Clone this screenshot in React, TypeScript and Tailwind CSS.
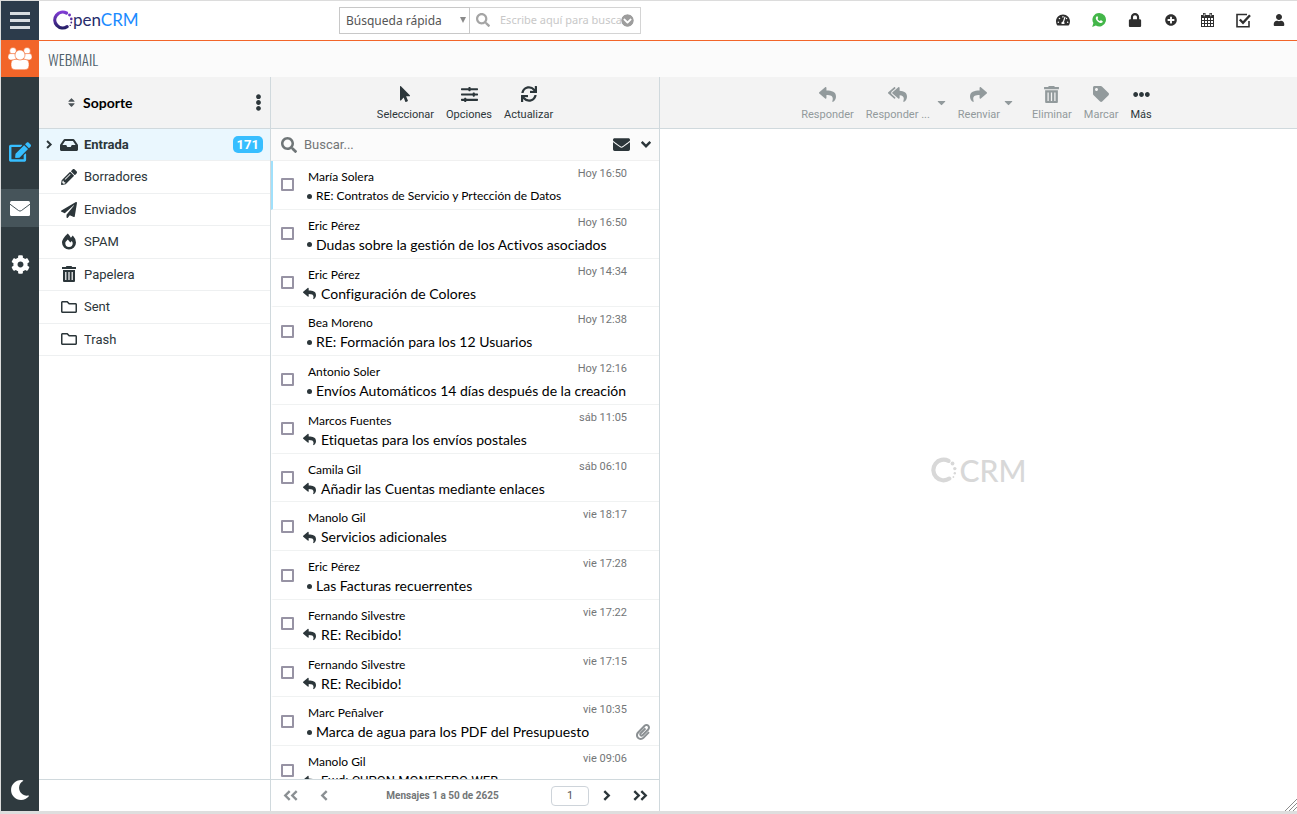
import { useState } from 'react';
import type { ReactNode } from 'react';
import {
  FaTachometerAlt, FaLock, FaPlusCircle, FaEdit, FaCog, FaMoon, FaInbox, FaPencilAlt, FaPaperPlane,
  FaRegFolder, FaMousePointer, FaSlidersH, FaSync, FaReply, FaReplyAll, FaShare, FaTag, FaEllipsisH,
  FaEllipsisV, FaSearch, FaEnvelope, FaSort, FaPaperclip, FaChevronCircleDown, FaUser, FaCaretDown,
} from 'react-icons/fa';

type Message = {
  from: string;
  subject: string;
  date: string;
  replied?: boolean;
  attachment?: boolean;
  subjectClass?: string;
};

const messages: Message[] = [
  { from: 'María Solera', subject: 'RE: Contratos de Servicio y Prtección de Datos', date: 'Hoy 16:50', subjectClass: 'text-xs' },
  { from: 'Eric Pérez', subject: 'Dudas sobre la gestión de los Activos asociados', date: 'Hoy 16:50' },
  { from: 'Eric Pérez', subject: 'Configuración de Colores', date: 'Hoy 14:34', replied: true },
  { from: 'Bea Moreno', subject: 'RE: Formación para los 12 Usuarios', date: 'Hoy 12:38' },
  { from: 'Antonio Soler', subject: 'Envíos Automáticos 14 días después de la creación', date: 'Hoy 12:16' },
  { from: 'Marcos Fuentes', subject: 'Etiquetas para los envíos postales', date: 'sáb 11:05', replied: true },
  { from: 'Camila Gil', subject: 'Añadir las Cuentas mediante enlaces', date: 'sáb 06:10', replied: true },
  { from: 'Manolo Gil', subject: 'Servicios adicionales', date: 'vie 18:17', replied: true },
  { from: 'Eric Pérez', subject: 'Las Facturas recuerrentes', date: 'vie 17:28' },
  { from: 'Fernando Silvestre', subject: 'RE: Recibido!', date: 'vie 17:22', replied: true },
  { from: 'Fernando Silvestre', subject: 'RE: Recibido!', date: 'vie 17:15', replied: true },
  { from: 'Marc Peñalver', subject: 'Marca de agua para los PDF del Presupuesto', date: 'vie 10:35', attachment: true },
  {
    from: 'Manolo Gil',
    subject: 'Fwd: CUPON MONEDERO WEB',
    date: 'vie 09:06',
    replied: true,
    subjectClass: "font-['Roboto',sans-serif] text-[13px]",
  },
];

const folders = [
  { name: 'Entrada', icon: <FaInbox size={18} />, count: 171 },
  { name: 'Borradores', icon: <FaPencilAlt size={16} /> },
  { name: 'Enviados', icon: <FaPaperPlane size={16} /> },
  { name: 'SPAM', icon: <FlameIcon /> },
  { name: 'Papelera', icon: <TrashIcon size={16} /> },
  { name: 'Sent', icon: <FaRegFolder size={16} /> },
  { name: 'Trash', icon: <FaRegFolder size={16} /> },
];

const topActions = [
  { label: 'Panel', icon: <FaTachometerAlt size={14} /> },
  { label: 'WhatsApp', icon: <WhatsappIcon /> },
  { label: 'Bloquear', icon: <FaLock size={14} /> },
  { label: 'Añadir', icon: <FaPlusCircle size={12} /> },
  { label: 'Calendario', icon: <CalendarIcon /> },
  { label: 'Tareas', icon: <TaskIcon /> },
  { label: 'Usuario', icon: <FaUser size={12} /> },
];

export default function App() {
  const [folder, setFolder] = useState('Entrada');

  return (
    <div className="h-screen flex flex-col overflow-hidden border-t border-l border-[#dcdcdc] bg-white font-['Roboto',sans-serif] text-[#2c363a]">
      <div className="flex flex-1 min-h-0">
        <Sidebar />
        <div className="flex flex-col flex-1 min-w-0">
          <Header />
          <div className="h-9 shrink-0 flex items-center bg-[#fbfbfb] pl-[9px]">
            <h1 className="font-['Oswald','Roboto_Condensed','Open_Sans_Condensed','Roboto',sans-serif] text-[15px] font-light text-[#4f5f6b]">WEBMAIL</h1>
          </div>
          <main className="flex flex-1 min-h-0">
            <section className="w-[232px] shrink-0 flex flex-col border-r border-[#d0d9dd]">
              <div className="h-[52px] shrink-0 flex items-center bg-[#f3f3f3] border-b border-[#d0d9dd] pl-[27px] pr-[3px]">
                <FaSort size={11} className="text-[#4b5357]" />
                <span className="flex-1 pl-[6px] font-['Lato',sans-serif] text-sm font-bold text-black">Soporte</span>
                <button aria-label="Opciones de carpeta"><FaEllipsisV size={17} /></button>
              </div>
              <nav className="grid auto-rows-fr h-[227px] shrink-0">
                {folders.map((f) => (
                  <button
                    key={f.name}
                    onClick={() => setFolder(f.name)}
                    className={`flex items-center border-b border-[#eef0f1] pl-[7px] pr-[7px] text-[13px] ${
                      folder === f.name ? 'bg-[#eaf7fe] font-bold' : ''
                    }`}
                  >
                    <span className="w-[13px]">{f.count && <Chevron className="h-[9px]" />}</span>
                    <span className="w-5 flex justify-center">{f.icon}</span>
                    <span className="flex-1 pl-[5px] text-left">{f.name}</span>
                    {f.count && (
                      <span className="h-[17px] rounded-[5px] bg-[#37beff] px-1 font-bold leading-[17px] text-white">{f.count}</span>
                    )}
                  </button>
                ))}
              </nav>
              <div className="flex-1" />
              <div className="h-8 shrink-0 border-t border-[#d0d9dd]" />
            </section>
            <MessageList />
            <section className="relative flex-1 min-w-0 flex flex-col">
              <div className="h-[52px] shrink-0 flex justify-center gap-3 bg-[#f3f3f3] border-b border-[#d0d9dd] pt-2 pr-1">
                <ToolButton disabled label="Responder" icon={<FaReply size={17} />} />
                <div className="flex gap-2">
                  <ToolButton disabled label="Responder ..." icon={<FaReplyAll size={19} />} />
                  <MoreArrow label="Más opciones de respuesta" />
                </div>
                <div className="flex gap-1">
                  <ToolButton disabled label="Reenviar" icon={<FaShare size={17} />} />
                  <MoreArrow label="Más opciones de reenvío" />
                </div>
                <div className="flex gap-3 pl-2">
                  <ToolButton disabled label="Eliminar" icon={<TrashIcon size={17} />} />
                  <ToolButton disabled label="Marcar" icon={<FaTag size={16} />} />
                  <ToolButton label="Más" icon={<FaEllipsisH size={17} />} />
                </div>
              </div>
              <div className="flex-1 flex items-center justify-center gap-[3px] text-[#d8d8d8]">
                <LogoMark size={26} color="#d8d8d8" />
                <span className="font-['Lato',sans-serif] text-3xl font-medium">CRM</span>
              </div>
              <svg className="absolute bottom-0 right-0" width="13" height="12" viewBox="0 0 13 12" stroke="#8c8c8c">
                <path d="M1 12 13 0M5 12l8-8M9 12l4-4" />
              </svg>
            </section>
          </main>
        </div>
      </div>
      <div className="h-[3px] shrink-0 bg-[#dedede]" />
    </div>
  );
}

function Sidebar() {
  return (
    <aside className="w-[38px] shrink-0 flex flex-col bg-[#2f3a3f] text-white">
      <button aria-label="Menú" className="h-[39px] flex flex-col items-center justify-center gap-1 bg-[#2c3b4b]">
        <span className="h-[3px] w-5 bg-[#d9dde0]" />
        <span className="h-[3px] w-5 bg-[#d9dde0]" />
        <span className="h-[3px] w-5 bg-[#d9dde0]" />
      </button>
      <button aria-label="Contactos" className="h-[37px] flex items-center justify-center bg-[#f26529]">
        <PeopleIcon />
      </button>
      <button aria-label="Redactar" className="mt-14 h-[38px] flex items-center justify-center text-[#37beff]">
        <FaEdit size={22} />
      </button>
      <button aria-label="Correo" className="mt-[18px] h-[38px] flex items-center justify-center bg-[#46545a]">
        <svg width="20" height="15" viewBox="0 0 20 15">
          <rect width="20" height="15" rx="1.5" fill="#fff" />
          <path d="M0 3.2 8.6 9.6q1.4 1 2.8 0L20 3.2" fill="none" stroke="#46545a" strokeWidth="1" />
        </svg>
      </button>
      <button aria-label="Configuración" className="mt-[18px] h-[38px] flex items-center justify-center">
        <FaCog size={19} />
      </button>
      <span className="flex-1" />
      <button aria-label="Modo oscuro" className="h-[42px] flex items-center justify-center">
        <FaMoon size={20} />
      </button>
    </aside>
  );
}

function Header() {
  return (
    <header className="h-10 shrink-0 flex items-center border-b border-[#f26529] pb-px">
      <a href="#" aria-label="OpenCRM" className="w-[300px] flex items-center pl-[14px]">
        <LogoMark size={20} color="url(#brand)" />
        <span className="font-['Lato',sans-serif] text-[17px] leading-5 text-[#272c6b]">
          pen<span className="text-[#1b8bff]">CRM</span>
        </span>
      </a>
      <div className="flex h-[27px] font-['Noto_Sans',sans-serif] text-[#555]">
        <div className="relative w-[131px]">
          <select aria-label="Tipo de búsqueda" className="h-full w-full appearance-none border border-[#c8c8c8] pl-[6px] text-xs">
            <option>Búsqueda rápida</option>
          </select>
          <svg className="absolute right-1 top-[10px]" width="6" height="6" viewBox="0 0 6 6"><path d="M0 0h6L3 6z" fill="#8a8a8a" /></svg>
        </div>
        <label className="relative flex w-[171px] items-center border border-l-0 border-[#d4d4d4] pl-[6px]">
          <FaSearch size={14} className="shrink-0 text-[#a5a5a5]" />
          <input
            aria-label="Buscar en OpenCRM"
            placeholder="Escribe aquí para buscar"
            className="min-w-0 flex-1 pl-[10px] text-[11px] outline-none placeholder:text-[#c8c8c8]"
          />
          <FaChevronCircleDown size={13} className="absolute right-[6px] rounded-full bg-white text-[#9d9d9d]" />
        </label>
      </div>
      <div className="ml-auto flex text-[#2f2f2f]">
        {topActions.map((a) => (
          <button key={a.label} aria-label={a.label} className="w-9 flex items-center justify-center">{a.icon}</button>
        ))}
      </div>
    </header>
  );
}

function MessageList() {
  return (
    <section className="w-[389px] shrink-0 flex flex-col border-r border-[#d0d9dd]">
      <div className="h-[52px] shrink-0 flex justify-center gap-3 bg-[#f3f3f3] border-b border-[#d0d9dd] pt-2">
        <ToolButton label="Seleccionar" icon={<FaMousePointer size={16} />} />
        <ToolButton label="Opciones" icon={<FaSlidersH size={17} />} />
        <ToolButton label="Actualizar" icon={<FaSync size={16} />} />
      </div>
      <div className="h-8 shrink-0 flex items-center bg-[#fbfbfb] border-b border-[#f0f0f0] pl-[10px] pr-[9px]">
        <FaSearch size={16} className="text-[#6f7577]" />
        <input aria-label="Buscar mensajes" placeholder="Buscar..." className="min-w-0 flex-1 pl-[7px] text-[13px] outline-none placeholder:text-[#737677]" />
        <button aria-label="No leídos"><FaEnvelope size={17} /></button>
        <button aria-label="Filtros" className="ml-3"><Chevron className="h-[11px] rotate-90" /></button>
      </div>
      <div className="flex-1 min-h-0 overflow-hidden">
        <ul className="grid auto-rows-fr h-[634px]">
          {messages.map((m, i) => (
            <MessageRow key={i} message={m} focused={i === 0} />
          ))}
        </ul>
      </div>
      <div className="h-8 shrink-0 flex items-center border-t border-[#d0d9dd] pl-3 pr-[11px]">
        <button aria-label="Primera página" className="flex text-[#8b9093]">
          <Chevron className="h-[11px] rotate-180" />
          <Chevron className="-ml-px h-[11px] rotate-180" />
        </button>
        <button aria-label="Página anterior" className="ml-[22px] text-[#8b9093]"><Chevron className="h-[11px] rotate-180" /></button>
        <span className="flex-1 pl-[6px] text-center text-[10px] font-bold text-[#737677]">Mensajes 1 a 50 de 2625</span>
        <input aria-label="Página" defaultValue="1" className="h-5 w-[38px] rounded-[4px] border border-[#ced4da] text-center text-[11px] text-[#555]" />
        <button aria-label="Página siguiente" className="ml-[14px]"><Chevron className="h-[11px]" /></button>
        <button aria-label="Última página" className="ml-[22px] flex">
          <Chevron className="h-[11px]" />
          <Chevron className="-ml-px h-[11px]" />
        </button>
      </div>
    </section>
  );
}

function MessageRow({ message, focused }: { message: Message; focused: boolean }) {
  return (
    <li className={`flex border-b border-[#f0f2f2] border-l-2 ${focused ? 'border-l-[#a0e0fb]' : 'border-l-transparent'}`}>
      <div className="w-[30px] flex items-center pl-2">
        <input type="checkbox" aria-label={message.subject} className="size-[13px] appearance-none rounded-[1px] border-2 border-[#9793a4]" />
      </div>
      <div className="flex-1 min-w-0 pt-[6px] font-['Lato',sans-serif] text-black [font-variant-ligatures:none]">
        <div className="flex justify-between pl-[5px]">
          <span className="text-xs leading-5">{message.from}</span>
          <span className="pr-8 font-['Roboto',sans-serif] text-[11px] leading-[14px] text-[#737677]">{message.date}</span>
        </div>
        <div className="flex items-center">
          {message.replied ? (
            <span className="w-[18px]"><FaReply size={13} className="text-[#2c363a]" /></span>
          ) : (
            <span className="w-[13px] pl-1"><span className="block size-[5px] rounded-full bg-[#2c363a]" /></span>
          )}
          <span className={`flex-1 whitespace-nowrap leading-[18px] ${message.subjectClass ?? 'text-sm'}`}>{message.subject}</span>
          {message.attachment && <FaPaperclip size={16} className="mr-2 text-[#8b9093]" />}
        </div>
      </div>
    </li>
  );
}

function ToolButton({ label, icon, disabled }: { label: string; icon: ReactNode; disabled?: boolean }) {
  return (
    <button disabled={disabled} className={`flex flex-col items-center self-start text-[11px] ${disabled ? 'text-[#929a9c]' : ''}`}>
      <span className="h-[18px] flex items-center">{icon}</span>
      <span className="mt-[5px] leading-[14px]">{label}</span>
    </button>
  );
}

function MoreArrow({ label }: { label: string }) {
  return (
    <button disabled aria-label={label} className="w-2 flex justify-center self-start pt-[11px] text-[#929a9c]">
      <FaCaretDown size={13} className="shrink-0" />
    </button>
  );
}

function Chevron({ className }: { className: string }) {
  return (
    <svg className={className} viewBox="0 0 8 11" fill="none" stroke="currentColor" strokeWidth="2.4">
      <path d="m1.300 1.200 4.400 4.300-4.400 4.300" />
    </svg>
  );
}

function LogoMark({ size, color }: { size: number; color: string }) {
  return (
    <svg width={size} height={size} viewBox="0 0 26 26" fill={color}>
      <defs>
        <linearGradient id="brand" x1="0" y1="0" x2="0" y2="26" gradientUnits="userSpaceOnUse">
          <stop stopColor="#8a3fe0" />
          <stop offset="1" stopColor="#1d1c5c" />
        </linearGradient>
      </defs>
      <path d="M17.500 3.900A10.300 10.300 0 1 0 18.300 21.600" fill="none" stroke={color} strokeWidth="4.200" strokeLinecap="round" />
      <circle cx="21.500" cy="6.500" r="1.900" />
      <circle cx="23.800" cy="11.600" r="1.700" />
      <circle cx="23.800" cy="16.200" r="1.200" />
      <circle cx="22.400" cy="20" r=".9" />
    </svg>
  );
}

function PeopleIcon() {
  return (
    <svg width="24" height="23" viewBox="0 0 24 23" fill="#fff" stroke="#f26529" strokeWidth=".6">
      <circle cx="5" cy="3.9" r="3.4" />
      <circle cx="19" cy="3.9" r="3.4" />
      <rect x="0" y="6.6" width="8.5" height="6.4" rx="2.4" />
      <rect x="15.500" y="6.600" width="8.500" height="6.400" rx="2.400" />
      <rect x="3" y="12.300" width="18" height="10.500" rx="4" />
      <circle cx="12" cy="8" r="5" />
    </svg>
  );
}

function FlameIcon() {
  return (
    <svg width="16" height="17" viewBox="0 0 16 17" fill="currentColor">
      <path fillRule="evenodd" d="M6.800.6Q3.900 3.200 2.400 5.400 1 7.600 1 9.600a7 6.900 0 0 0 14 0Q15 6 11.800 2.600l-1.900 2.200Q8.600 2.400 6.800.6ZM6.800 6.600l2.500 3 1.500-1.600q.9 1.200.9 2.300a3.700 3.700 0 0 1-7.400 0Q4.300 8.800 6.800 6.600Z" />
    </svg>
  );
}

function TrashIcon({ size }: { size: number }) {
  return (
    <svg width={size} height={size} viewBox="0 0 16 16" fill="currentColor">
      <path d="M5.500 0h5l.7 1H15v2H1V1h3.800z" />
      <path fillRule="evenodd" d="M2 4h12v11q0 1-1 1H3q-1 0-1-1zm2.200 2v8h1.200V6zm3.200 0v8h1.200V6zm3.200 0v8h1.200V6z" />
    </svg>
  );
}

function WhatsappIcon() {
  return (
    <svg width="14" height="14" viewBox="0 0 14 14">
      <path d="M7.200 0a6.700 6.700 0 1 1-3.300 12.500L.2 14l1.200-3.900A6.700 6.700 0 0 1 7.200 0z" fill="#43b649" />
      <path d="M4.600 3.400c-1.500 1-.8 3.200.9 4.900s4 2.500 5 1c.4-.7.300-1.100-.2-1.400l-1.200-.6c-.5-.2-.8.800-1.300.7-1-.3-1.800-1.100-2.200-2-.2-.4.700-.8.500-1.300l-.5-1.200c-.2-.4-.7-.3-1-.1z" fill="#fff" />
    </svg>
  );
}

function CalendarIcon() {
  return (
    <svg width="13" height="14" viewBox="0 0 13 14" fill="#2f2f2f">
      <path fillRule="evenodd" d="M0 2h2V0h2.500v2h4V0H11v2h2v12H0zM1 5v2h2V5zm3 0v2h2V5zm3 0v2h2V5zm3 0v2h2V5zM1 8v2h2V8zm3 0v2h2V8zm3 0v2h2V8zm3 0v2h2V8zM1 11v2h2v-2zm3 0v2h2v-2zm3 0v2h2v-2zm3 0v2h2v-2z" />
      <path d="M3.200.7v2.600M9.800.7v2.600" stroke="#fff" strokeWidth=".8" />
    </svg>
  );
}

function TaskIcon() {
  return (
    <svg width="15" height="15" viewBox="0 0 15 15" fill="none" stroke="#2f2f2f">
      <path d="M11 1.500H1v12.300h12V8" strokeWidth="1.600" />
      <path d="m3.800 6.500 3.200 3.300L14 2.200" strokeWidth="2.400" />
    </svg>
  );
}
